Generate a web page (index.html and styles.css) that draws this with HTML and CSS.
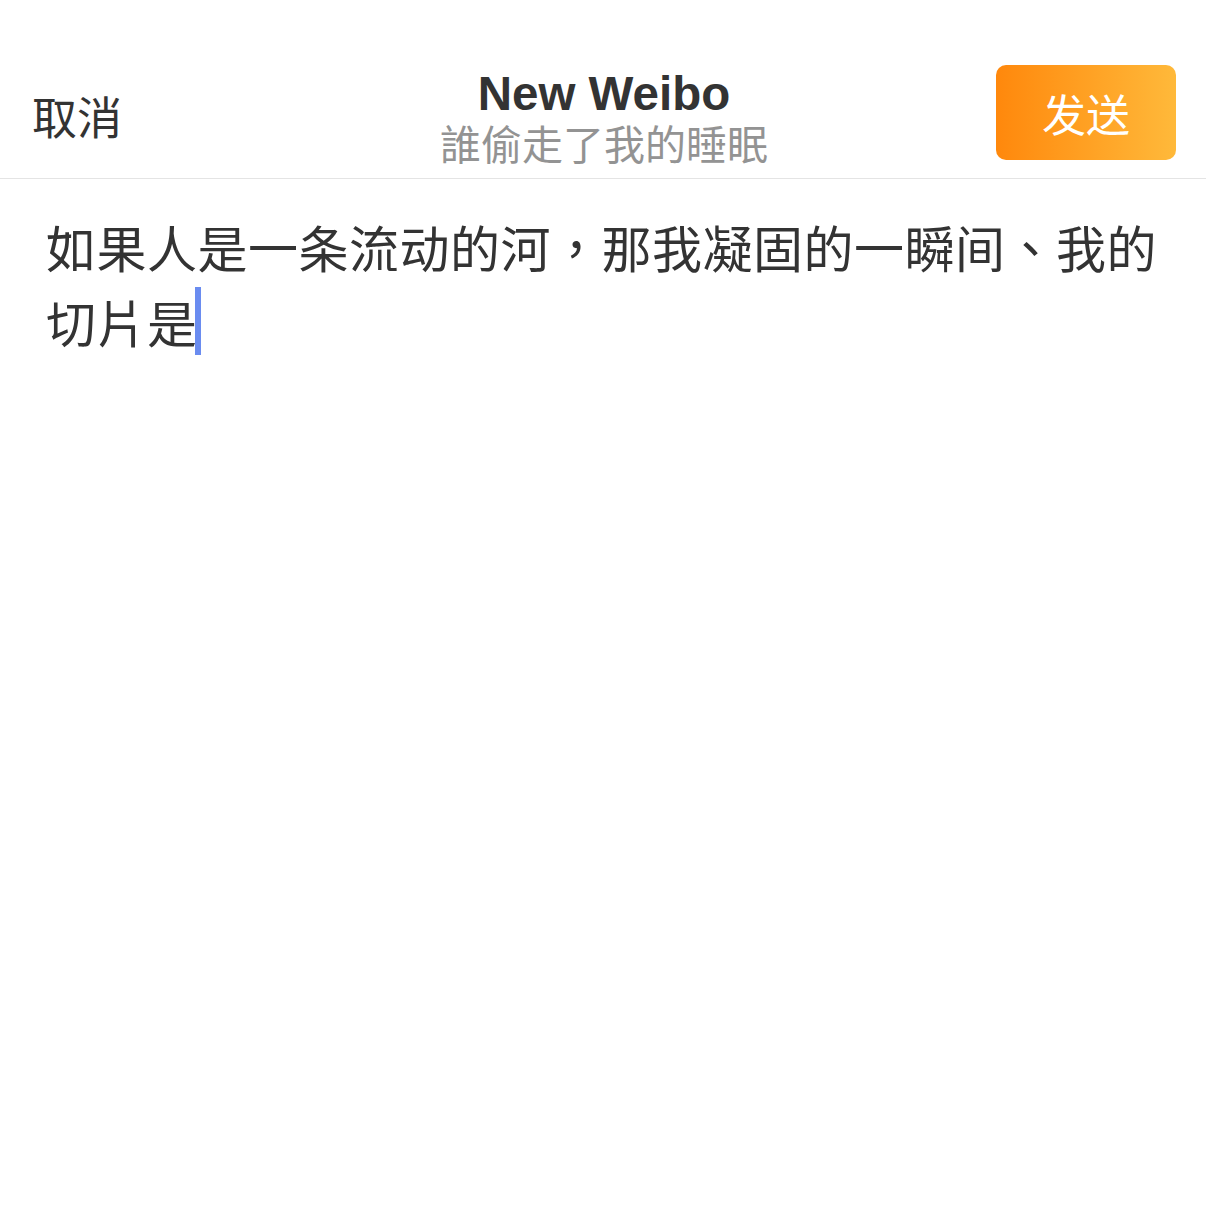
FILE: index.html
```html
<!DOCTYPE html>
<html lang="zh">
<head>
    <meta charset="UTF-8">
    <meta name="viewport" content="width=device-width, initial-scale=1.0">
    <title>New Weibo</title>
    <link rel="stylesheet" href="styles.css">
</head>
<body>
    <header class="compose-header">
        <div class="cancel-button">取消</div>
        <div class="title-block">
            <div class="title">New Weibo</div>
            <div class="subtitle" lang="zh-Hant">誰偷走了我的睡眠</div>
        </div>
        <div class="send-button">发送</div>
    </header>

    <div class="editor">
        <p class="editor-text" lang="zh-Hant">如果人是一条流动的河，那我凝固的一瞬间、我的切片是<span class="cursor"></span></p>
    </div>
</body>
</html>
```

FILE: styles.css
```css
body {
    margin: 0;
    padding: 0;
    background-color: #ffffff;
    font-family: "Noto Sans", "Noto Sans CJK SC", sans-serif;
    color: #333333;
}
.compose-header {
    display: flex;
    justify-content: space-between;
    align-items: flex-start;
    height: 179px;
    box-sizing: border-box;
    padding: 0 30px 0 32px;
    border-bottom: 1px solid #e4e4e4;
}
.cancel-button {
    margin-top: 88px;
    font-size: 45px;
    line-height: 60px;
    color: #333333;
    width: 180px;
}
.title-block {
    margin-top: 69px;
    text-align: center;
}
.title {
    font-family: "Liberation Sans", Arial, sans-serif;
    font-weight: bold;
    font-size: 47.5px;
    line-height: 50px;
    color: #333333;
}
.subtitle {
    font-size: 41px;
    line-height: 46px;
    color: #939393;
    font-family: "Noto Sans CJK TC", sans-serif;
}
.send-button {
    margin-top: 65px;
    width: 180px;
    height: 95px;
    border-radius: 10px;
    background: linear-gradient(to right, #ff880c, #ffb93a);
    color: #ffffff;
    font-size: 44px;
    display: flex;
    justify-content: center;
    align-items: center;
}
.editor {
    padding: 30px 46px 0 46px;
}
.editor-text {
    margin: 0;
    font-family: "Noto Sans CJK TC", sans-serif;
    font-size: 50px;
    letter-spacing: 0.5px;
    line-height: 75px;
    color: #333333;
}
.cursor {
    display: inline-block;
    width: 6px;
    height: 68px;
    margin-left: -3px;
    background-color: #6a8cf0;
    vertical-align: -12px;
}
```
